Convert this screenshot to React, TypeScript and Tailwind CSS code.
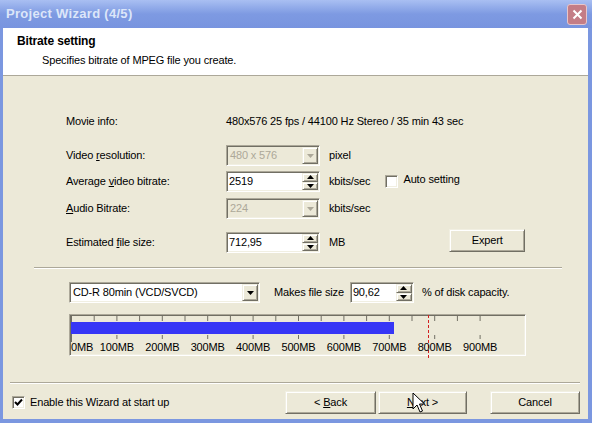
import React from "react";

const sunken =
  "border border-t-[#aca899] border-l-[#aca899] border-b-white border-r-white shadow-[inset_1px_1px_0_#716f64,inset_-1px_-1px_0_#f1efe2]";
const raised =
  "border border-t-[#f1efe2] border-l-[#f1efe2] border-b-[#716f64] border-r-[#716f64] shadow-[inset_1px_1px_0_#ffffff,inset_-1px_-1px_0_#aca899] bg-[#ece9d8]";

function Tri({ up, color = "#000" }: { up?: boolean; color?: string }) {
  return (
    <svg width="7" height="4" viewBox="0 0 7 4">
      <path d={up ? "M3.5 0 L7 4 L0 4 Z" : "M0 0 L7 0 L3.5 4 Z"} fill={color} />
    </svg>
  );
}

function Spin({ value, w }: { value: string; w: string }) {
  return (
    <div className={`flex h-[21px] bg-white ${w} ${sunken}`}>
      <div className="flex-1 pl-[2px] pt-[2px] leading-[14px]">{value}</div>
      <div className="flex w-[17px] flex-col p-[1px] pl-0">
        <div className={`flex flex-1 items-center justify-center ${raised}`}>
          <Tri up />
        </div>
        <div className={`flex flex-1 items-center justify-center ${raised}`}>
          <Tri />
        </div>
      </div>
    </div>
  );
}

function Combo({
  value,
  w,
  disabled,
}: {
  value: string;
  w: string;
  disabled?: boolean;
}) {
  return (
    <div
      className={`flex h-[21px] ${w} ${sunken} ${
        disabled ? "bg-[#ece9d8] text-[#aca899]" : "bg-white"
      }`}
    >
      <div className="flex-1 pl-[3px] pt-[2px] leading-[14px]">{value}</div>
      <div className="p-[1px] pl-0">
        <div className={`flex h-full w-[16px] items-center justify-center ${raised}`}>
          <Tri color={disabled ? "#aca899" : "#000"} />
        </div>
      </div>
    </div>
  );
}

function Btn({ children, w }: { children: React.ReactNode; w: string }) {
  return (
    <div className={`flex h-[23px] items-center justify-center ${w} ${raised}`}>
      {children}
    </div>
  );
}

function Row({
  label,
  children,
  className = "",
}: {
  label: React.ReactNode;
  children: React.ReactNode;
  className?: string;
}) {
  return (
    <div className={`flex h-[21px] items-center ${className}`}>
      <div className="w-[160px]">{label}</div>
      {children}
    </div>
  );
}

function Scale() {
  const step = 22.7;
  const ticks = Array.from({ length: 19 }, (_, i) => i);
  const labels = [0, 100, 200, 300, 400, 500, 600, 700, 800, 900];
  return (
    <div className={`relative h-[42px] w-[457px] bg-[#ece9d8] ${sunken}`}>
      <svg width="457" height="42" className="absolute -left-px -top-px overflow-visible">
        {ticks.map((i) => {
          const x = 2.5 + step * i;
          const major = i % 2 === 0;
          return (
            <g key={i} stroke="#716f64" strokeWidth="1">
              <line x1={x} y1={1} x2={x} y2={i === 0 ? 28 : 7} />
              {major && i > 0 && <line x1={x} y1={21} x2={x} y2={25} />}
            </g>
          );
        })}
        <rect x="2" y="8" width="323" height="12" fill="#3636f6" />
        <line
          x1="359.5"
          y1="1"
          x2="359.5"
          y2="45"
          stroke="#d22020"
          strokeWidth="1"
          strokeDasharray="3 2"
        />
        {labels.map((v, i) => (
          <text
            key={v}
            x={i === 0 ? 2 : 2.5 + step * 2 * i}
            y="37"
            fontSize="11"
            letterSpacing="-0.15"
            fontFamily="'Liberation Sans', Arial, sans-serif"
            textAnchor={i === 0 ? "start" : "middle"}
            fill="#000"
          >
            {v}MB
          </text>
        ))}
      </svg>
    </div>
  );
}

function Cursor() {
  return (
    <svg
      width="14"
      height="22"
      viewBox="0 0 14 22"
      className="absolute left-[412px] top-[392px]"
    >
      <path
        d="M1 1 L1 17 L5 13 L8 20 L10.5 19 L7.5 12 L12.5 12 Z"
        fill="#fff"
        stroke="#000"
        strokeWidth="1"
        strokeLinejoin="miter"
      />
    </svg>
  );
}

export default function App() {
  return (
    <div className="relative flex h-[423px] w-[592px] flex-col bg-[#7b97e0] pb-[4px] pl-[3px] pr-[4px] font-['Liberation_Sans',Arial,sans-serif] text-[11px] tracking-[-0.15px] text-black">
      {/* title bar */}
      <div className="-ml-[3px] -mr-[4px] flex h-[28px] items-center justify-between bg-linear-to-b from-[#a9bff2] via-[#7e9ae2] to-[#7894df] pl-[6px] pr-[5px]">
        <span className="font-['Liberation_Sans',Arial,sans-serif] text-[13px] font-bold tracking-[0.3px] text-[#dce6f9]">
          Project Wizard (4/5)
        </span>
        <div className="flex h-[21px] w-[20px] items-center justify-center rounded-[3px] border border-[#e6c6cb] bg-[#c47d86]">
          <svg width="11" height="11" viewBox="0 0 11 11">
            <path d="M1.5 1.5 L9.5 9.5 M9.5 1.5 L1.5 9.5" stroke="#fff" strokeWidth="2" />
          </svg>
        </div>
      </div>

      {/* header */}
      <div className="h-[48px] border-b border-[#aca899] bg-white pl-[14px]">
        <div className="pt-[6px] text-[12px] font-bold leading-[14px]">Bitrate setting</div>
        <div className="mt-[5px] pl-[25px] leading-[14px]">
          Specifies bitrate of MPEG file you create.
        </div>
      </div>

      {/* body */}
      <div className="flex flex-1 flex-col bg-[#ece9d8]">
        <div className="pl-[63px]">
          <Row label="Movie info:" className="mt-[35px]">
            <span>480x576 25 fps / 44100 Hz Stereo / 35 min 43 sec</span>
          </Row>
          <Row
            label={
              <>
                Video <u>r</u>esolution:
              </>
            }
            className="mt-[13px]"
          >
            <Combo value="480 x 576" w="w-[94px]" disabled />
            <span className="ml-[9px]">pixel</span>
          </Row>
          <Row
            label={
              <>
                Average <u>v</u>ideo bitrate:
              </>
            }
            className="mt-[5px]"
          >
            <Spin value="2519" w="w-[94px]" />
            <span className="ml-[9px]">kbits/sec</span>
            <div className={`ml-[15px] h-[13px] w-[13px] bg-white ${sunken}`} />
            <span className="-mt-[4px] ml-[5px]">Auto setting</span>
          </Row>
          <Row
            label={
              <>
                <u>A</u>udio Bitrate:
              </>
            }
            className="mt-[6px]"
          >
            <Combo value="224" w="w-[94px]" disabled />
            <span className="ml-[9px]">kbits/sec</span>
          </Row>
          <Row
            label={
              <>
                Estimated <u>f</u>ile size:
              </>
            }
            className="mt-[13px]"
          >
            <Spin value="712,95" w="w-[94px]" />
            <span className="ml-[9px]">MB</span>
            <div className="-mt-[4px] ml-[104px]">
              <Btn w="w-[76px]">
                <span>Expert</span>
              </Btn>
            </div>
          </Row>
        </div>

        <div className="ml-[31px] mr-[26px] mt-[14px] h-[2px] border-b border-t border-b-white border-t-[#aca899]" />

        <div className="ml-[66px] mt-[13px] flex h-[21px] items-center">
          <Combo value="CD-R 80min (VCD/SVCD)" w="w-[191px]" />
          <span className="ml-[14px]">Makes file size</span>
          <div className="ml-[6px]">
            <Spin value="90,62" w="w-[64px]" />
          </div>
          <span className="ml-[8px]">% of disk capacity.</span>
        </div>

        <div className="ml-[66px] mt-[11px]">
          <Scale />
        </div>

        <div className="ml-[7px] mr-[8px] mt-[26px] h-[2px] border-b border-t border-b-white border-t-[#aca899]" />

        <div className="mt-[7px] flex items-center">
          <div className="ml-[9px] flex items-center">
            <div className={`flex h-[13px] w-[13px] items-center justify-center bg-white ${sunken}`}>
              <svg width="9" height="9" viewBox="0 0 9 9">
                <path d="M1 4 L3.5 6.5 L8 1.5" stroke="#000" strokeWidth="2" fill="none" />
              </svg>
            </div>
            <span className="ml-[5px]">Enable this Wizard at start up</span>
          </div>
          <div className="ml-auto mr-[8px] flex">
            <Btn w="w-[91px]">
              <span>
                &lt; <u>B</u>ack
              </span>
            </Btn>
            <div className="ml-[2px]">
              <Btn w="w-[89px]">
                <span>
                  <u>N</u>ext &gt;
                </span>
              </Btn>
            </div>
            <div className="ml-[23px]">
              <Btn w="w-[90px]">
                <span>Cancel</span>
              </Btn>
            </div>
          </div>
        </div>
      </div>
      <Cursor />
    </div>
  );
}
